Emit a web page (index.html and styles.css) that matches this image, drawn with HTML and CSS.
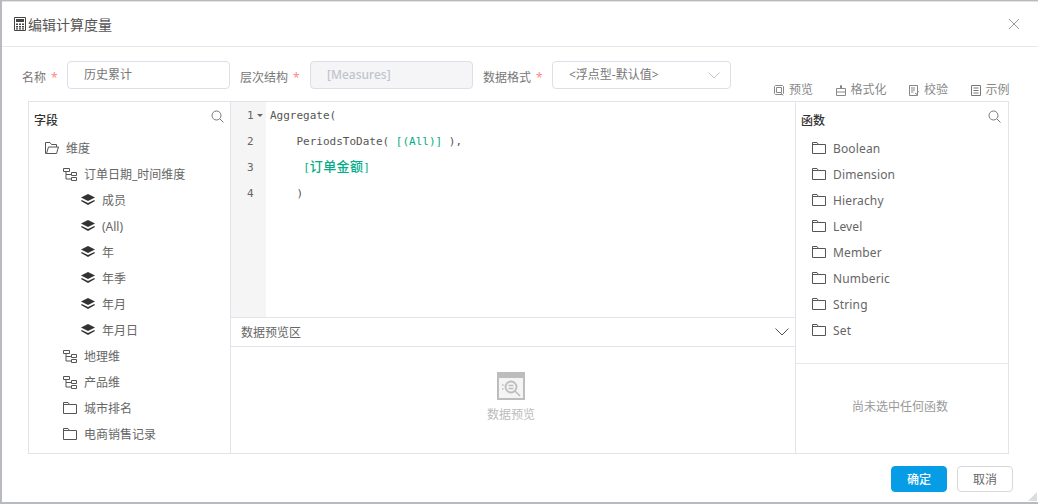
FILE: index.html
```html
<!DOCTYPE html>
<html lang="zh">
<head>
<meta charset="utf-8">
<title>编辑计算度量</title>
<link rel="stylesheet" href="styles.css">
</head>
<body>
<svg class="defs" width="0" height="0">
  <defs>
    <symbol id="folder" viewBox="0 0 14 12"><path d="M.5 11.500V.5h4.500l1.500 2h7v9z M.5 2.500h6" fill="none" stroke="currentColor"/></symbol>
    <symbol id="folder-open" viewBox="0 0 14 12"><path d="M1.500 11.500H.5V.5h4.500l1.500 2h5v2.500 M1.500 11.500l2-6.500h10l-2 6.500z" fill="none" stroke="currentColor"/></symbol>
    <symbol id="tree" viewBox="0 0 14 13"><path d="M.5.5h6v3h-6z M3 3.500v7.500h5 M3 6.500h5 M8.500 4.500h5v3h-5z M8.500 9.500h5v3h-5z" fill="none" stroke="currentColor"/></symbol>
    <symbol id="layers" viewBox="0 0 14 12"><path d="M7 0l7 3.500-7 3.500-7-3.500z" fill="currentColor"/><path d="M.8 6l6.200 3.100L13.200 6l.8.900L7 11 0 6.900z" fill="currentColor"/></symbol>
    <symbol id="search" viewBox="0 0 13 13"><circle cx="5.500" cy="5.500" r="4.500" fill="none" stroke="currentColor"/><path d="M9 9l3.500 3.500" stroke="currentColor"/></symbol>
  </defs>
</svg>
<div class="dialog">
  <header class="dialog-head">
    <svg class="calc" width="12" height="14" viewBox="0 0 12 14"><path d="M.5.500h11v13H.5z" fill="none" stroke="#444"/><path d="M2 2h8v3H2z M2 6.500h2v1.500H2z M5 6.500h2v1.500H5z M8 6.500h2v1.500H8z M2 9h2v1.500H2z M5 9h2v1.500H5z M8 9h2v1.500H8z M2 11.200h2v1.300H2z M5 11.200h2v1.300H5z M8 11.200h2v1.300H8z" fill="#444"/></svg>
    <h1 class="dialog-title">编辑计算度量</h1>
    <svg class="close" width="12" height="12" viewBox="0 0 12 12"><path d="M1 1l10 10M11 1L1 11" stroke="#9a9a9a" fill="none"/></svg>
  </header>

  <div class="form-row">
    <label class="field-label name-label">名称<span class="req">*</span></label>
    <div class="input name-input">历史累计</div>
    <label class="field-label level-label">层次结构<span class="req">*</span></label>
    <div class="input disabled-input">[Measures]</div>
    <label class="field-label format-label">数据格式<span class="req">*</span></label>
    <div class="input select-input">&lt;浮点型-默认值&gt;
      <svg width="12" height="7" viewBox="0 0 12 7"><path d="M.5.500L6 6 11.500.500" stroke="#c4c7d0" fill="none"/></svg>
    </div>
    <div class="tools">
      <span class="tool"><svg width="10" height="11" viewBox="0 0 10 11"><path d="M1.500.500h7l1 1v7l-1 1h-7l-1-1v-7z M2.500 2.500h5v5h-5z M7 8l2 2.500" fill="none" stroke="#888"/></svg>预览</span>
      <span class="tool"><svg width="10" height="11" viewBox="0 0 10 11"><path d="M.5 3.500h9v7h-9z M4.500 3.500v-3h1v3 M.5 7h9" fill="none" stroke="#888"/></svg>格式化</span>
      <span class="tool"><svg width="10" height="11" viewBox="0 0 10 11"><path d="M.5.500h8v10H.5z M2 3h4 M2 5h4 M2 7h2.500 M6 8l1.500 1.500L9.500 6" fill="none" stroke="#888"/></svg>校验</span>
      <span class="tool"><svg width="10" height="11" viewBox="0 0 10 11"><path d="M.5.500h9v10H.5z M2.500 3h5 M2.500 5.500h5 M2.500 8h5" fill="none" stroke="#777"/></svg>示例</span>
    </div>
  </div>

  <main class="workspace">
    <aside class="fields">
      <div class="panel-head">
        <strong>字段</strong>
        <svg class="search" width="13" height="13"><use href="#search"/></svg>
      </div>
      <ul class="tree">
        <li class="lv1"><svg width="14" height="12"><use href="#folder-open"/></svg>维度</li>
        <li class="lv2"><svg width="14" height="13"><use href="#tree"/></svg>订单日期_时间维度</li>
        <li class="lv3"><svg width="14" height="12"><use href="#layers"/></svg>成员</li>
        <li class="lv3"><svg width="14" height="12"><use href="#layers"/></svg>(All)</li>
        <li class="lv3"><svg width="14" height="12"><use href="#layers"/></svg>年</li>
        <li class="lv3"><svg width="14" height="12"><use href="#layers"/></svg>年季</li>
        <li class="lv3"><svg width="14" height="12"><use href="#layers"/></svg>年月</li>
        <li class="lv3"><svg width="14" height="12"><use href="#layers"/></svg>年月日</li>
        <li class="lv2"><svg width="14" height="13"><use href="#tree"/></svg>地理维</li>
        <li class="lv2"><svg width="14" height="13"><use href="#tree"/></svg>产品维</li>
        <li class="lv2"><svg width="14" height="12"><use href="#folder"/></svg>城市排名</li>
        <li class="lv2"><svg width="14" height="12"><use href="#folder"/></svg>电商销售记录</li>
      </ul>
    </aside>

    <section class="center">
      <div class="editor">
        <div class="gutter">
          <div class="ln">1<i class="fold"></i></div>
          <div class="ln">2</div>
          <div class="ln">3</div>
          <div class="ln">4</div>
        </div>
        <div class="code">
          <div class="cl">Aggregate(</div>
          <div class="cl">    PeriodsToDate( <b>[(All)]</b> ),</div>
          <div class="cl">     <b>[<span class="cjk">订单金额</span>]</b></div>
          <div class="cl">    )</div>
        </div>
      </div>
      <div class="preview-head">
        <span>数据预览区</span>
        <svg width="14" height="8" viewBox="0 0 14 8"><path d="M.5.500L7 7 13.500.500" stroke="#555" fill="none"/></svg>
      </div>
      <div class="preview-body">
        <svg width="28" height="28" viewBox="0 0 28 28">
          <path d="M0 0h28v28H0z" fill="#bdbdbd"/>
          <path d="M2 6h24v20H2z" fill="#f4f4f4"/>
          <circle cx="14" cy="15" r="5.500" fill="none" stroke="#bdbdbd" stroke-width="1.800"/>
          <path d="M11.500 13.500h5M11.500 16.500h5M18 19l5 5M5 13h1.500M5 17h1.500" stroke="#bdbdbd" stroke-width="1.500" fill="none"/>
        </svg>
        <span>数据预览</span>
      </div>
    </section>

    <aside class="functions">
      <div class="panel-head fn-head">
        <strong>函数</strong>
        <svg class="search" width="13" height="13"><use href="#search"/></svg>
      </div>
      <ul class="tree fn-list">
        <li><svg width="14" height="12"><use href="#folder"/></svg>Boolean</li>
        <li><svg width="14" height="12"><use href="#folder"/></svg>Dimension</li>
        <li><svg width="14" height="12"><use href="#folder"/></svg>Hierachy</li>
        <li><svg width="14" height="12"><use href="#folder"/></svg>Level</li>
        <li><svg width="14" height="12"><use href="#folder"/></svg>Member</li>
        <li><svg width="14" height="12"><use href="#folder"/></svg>Numberic</li>
        <li><svg width="14" height="12"><use href="#folder"/></svg>String</li>
        <li><svg width="14" height="12"><use href="#folder"/></svg>Set</li>
      </ul>
      <div class="fn-empty">尚未选中任何函数</div>
    </aside>
  </main>

  <footer class="dialog-foot">
    <button class="btn primary">确定</button>
    <button class="btn">取消</button>
  </footer>
  <i class="grip"></i>
</div>
</body>
</html>
```

FILE: styles.css
```css
* { box-sizing: border-box; }
html, body { height: 100%; }
body {
  margin: 0;
  background: #b9b9c0;
  font-family: "Noto Sans", "Noto Sans CJK SC", sans-serif;
  font-size: 12px;
  color: #666;
  overflow: hidden;
}
.defs { position: absolute; }
.dialog {
  position: relative;
  margin: 1px 0 0 2px;
  width: 1036px;
  height: 501px;
  background: #fff;
  border-top: 1px solid #e4e4e4;
  display: flex;
  flex-direction: column;
}
.dialog-head {
  height: 45px;
  border-bottom: 1px solid #e8e8ec;
  display: flex;
  align-items: center;
  padding: 0 18px 0 12px;
  flex: none;
}
.calc { margin-right: 2px; }
.dialog-title {
  margin: 0;
  font-size: 14px;
  font-weight: 400;
  color: #555;
  flex: 1;
}
.form-row {
  flex: none;
  height: 54px;
  padding: 14px 0 0 20px;
  display: flex;
  align-items: flex-start;
  position: relative;
}
.field-label {
  height: 28px;
  line-height: 33px;
  color: #777;
  width: 70px;
}
.req { color: #f88; margin-left: 5px; }
.name-label { width: 45px; }
.level-label { margin-left: 1px; width: 70px; }
.format-label { width: 69px; }
.input {
  height: 28px;
  border: 1px solid #dcdfe8;
  border-radius: 4px;
  line-height: 26px;
  padding-left: 16px;
  color: #777;
}
.name-input { width: 163px; margin-right: 9px; }
.disabled-input {
  width: 163px;
  margin-right: 10px;
  background: #f5f5f7;
  color: #c0c4cc;
  font-weight: 500;
}
.select-input {
  width: 179px;
  display: flex;
  align-items: center;
  justify-content: space-between;
  padding-right: 10px;
}
.tools {
  display: flex;
  margin-left: 43px;
  margin-top: 21px;
  gap: 22.5px;
  line-height: 16px;
  color: #888;
}
.tool { display: flex; align-items: center; gap: 5px; }
.workspace {
  flex: none;
  height: 353px;
  margin: 0 0 0 26px;
  width: 981px;
  border: 1px solid #e2e4ec;
  display: flex;
}
.fields {
  width: 202px;
  flex: none;
  border-right: 1px solid #e2e4ec;
}
.panel-head {
  height: 33px;
  display: flex;
  align-items: center;
  justify-content: space-between;
  padding: 2px 6px 0 5px;
  color: #333;
}
.panel-head strong { font-weight: 500; }
.search { color: #777; margin-top: -7px; }
.tree { list-style: none; margin: 0; padding: 0; }
.tree li {
  height: 26px;
  display: flex;
  align-items: center;
  gap: 7px;
  white-space: nowrap;
}
.lv1 { padding-left: 16px; }
.lv2 { padding-left: 34px; }
.tree .lv3 { padding-left: 52px; }
.tree li svg { color: #555; flex: none; }
.tree .lv3 svg { color: #333; }
.center { flex: 1; min-width: 0; display: flex; flex-direction: column; }
.editor { height: 215px; display: flex; flex: none; }
.gutter {
  width: 35px;
  background: #f5f5f5;
  flex: none;
  color: #666;
  padding-top: 1px;
  font: 11px/26px "DejaVu Sans Mono", monospace;
}
.ln { height: 26px; padding-left: 16px; position: relative; }
.fold {
  position: absolute;
  left: 26px;
  top: 11px;
  border: 3px solid transparent;
  border-top: 3px solid #666;
  border-bottom: 0;
}
.code {
  padding: 1px 0 0 4px;
  font: 11px/26px "DejaVu Sans Mono", "Noto Sans CJK SC", monospace;
  color: #555;
}
.cl { height: 26px; white-space: pre; }
.code b { color: #00ad88; font-weight: 400; }
.cjk { font-size: 13px; letter-spacing: .4px; line-height: 1; font-weight: 500; }
.preview-head {
  height: 30px;
  flex: none;
  border-top: 1px solid #e2e4ec;
  border-bottom: 1px solid #e2e4ec;
  display: flex;
  align-items: center;
  justify-content: space-between;
  padding: 0 6px 0 10px;
}
.preview-body {
  flex: 1;
  display: flex;
  flex-direction: column;
  align-items: center;
  padding: 25px 4px 0 0;
  gap: 5px;
  color: #bbb;
}
.functions {
  width: 213px;
  flex: none;
  border-left: 1px solid #e2e4ec;
  display: flex;
  flex-direction: column;
}
.fn-head { padding-left: 5px; padding-right: 7px; }
.fn-list { height: 228px; flex: none; }
.fn-list li { padding-left: 16px; letter-spacing: .15px; }
.fn-empty {
  flex: 1;
  border-top: 1px solid #e8e8ec;
  display: flex;
  align-items: center;
  justify-content: center;
  padding: 0 4px 6px 0;
  color: #999;
}
.dialog-foot {
  flex: none;
  display: flex;
  justify-content: flex-end;
  gap: 10px;
  padding: 12px 25px 0 0;
}
.btn {
  width: 56px;
  height: 26px;
  border: 1px solid #d8d8d8;
  border-radius: 4px;
  background: #fff;
  color: #666;
  font: inherit;
  padding: 0;
}
.primary { background: #069ce6; border-color: #069ce6; color: #fff; font-weight: 500; }
.grip {
  position: absolute;
  right: 1px;
  bottom: 1px;
  width: 0;
  height: 0;
  border-left: 9px solid transparent;
  border-bottom: 9px solid #dcdcdc;
}
```
